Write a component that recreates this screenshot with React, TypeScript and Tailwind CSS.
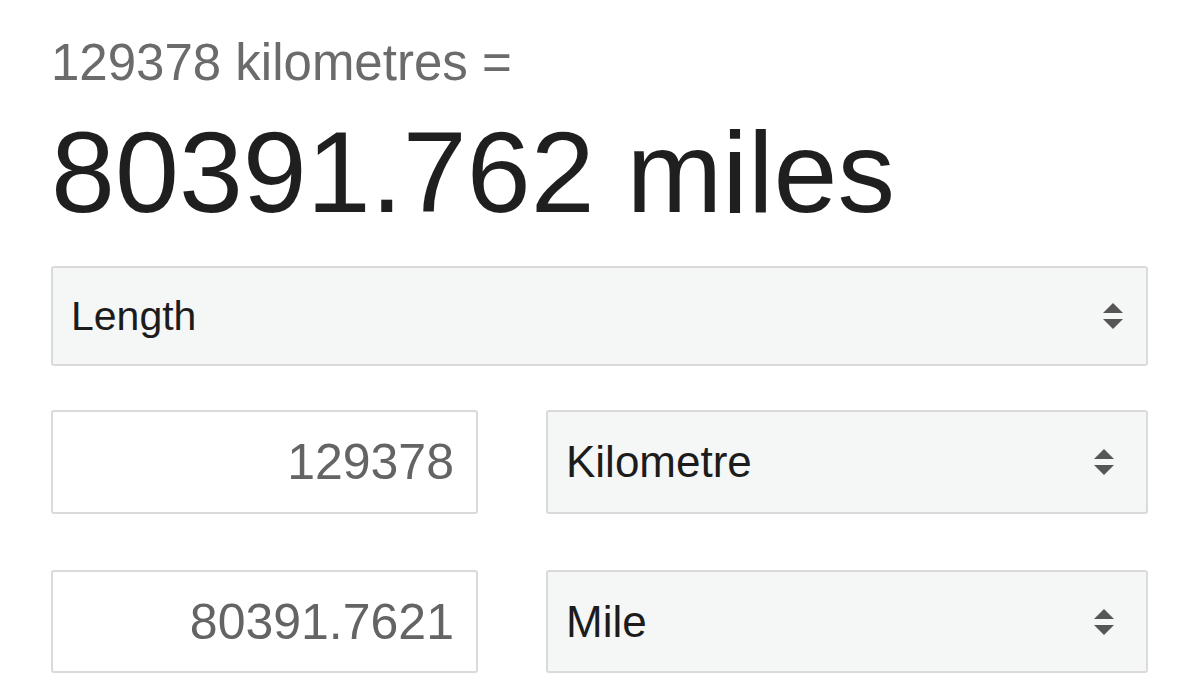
import React from "react";

function Arrows() {
  return (
    <svg width="22" height="28" viewBox="0 0 22 28" className="shrink-0">
      <polygon points="1,11 11,1 21,11" fill="#565656" />
      <polygon points="1,17 21,17 11,27" fill="#565656" />
    </svg>
  );
}

function UnitSelect({ label, size, pr }: { label: string; size: string; pr: string }) {
  return (
    <div
      className={`flex h-full flex-1 items-center justify-between rounded-[3px] border-2 border-[#dadada] bg-[#f5f6f6] pl-[18px] ${pr}`}
    >
      <span className={`${size} leading-none text-[#1c1c1c]`}>{label}</span>
      <Arrows />
    </div>
  );
}

function ValueBox({ value }: { value: string }) {
  return (
    <div className="flex h-full w-[427px] items-center justify-end rounded-[3px] border-2 border-[#dadada] bg-white pr-[22px]">
      <span className="text-[50px] leading-none text-[#646464]">{value}</span>
    </div>
  );
}

export default function App() {
  return (
    <div className="min-h-screen bg-white pl-[51px] pt-[38px] font-['Liberation_Sans',Arial,sans-serif]">
      <div className="w-[1097px]">
        <div className="text-[51px] leading-[50px] text-[#6b6b6b]">129378 kilometres =</div>
        <div className="mt-[27px] text-[115px] leading-[115px] text-[#1f1f1f]">80391.762 miles</div>

        <div className="mt-[36px] flex h-[100px]">
          <UnitSelect label="Length" size="text-[41px]" pr="pr-[22px]" />
        </div>

        <div className="mt-[44px] flex h-[104px] gap-[68px]">
          <ValueBox value="129378" />
          <UnitSelect label="Kilometre" size="text-[44px]" pr="pr-[31px]" />
        </div>

        <div className="mt-[56px] flex h-[103px] gap-[68px]">
          <ValueBox value="80391.7621" />
          <UnitSelect label="Mile" size="text-[44px]" pr="pr-[31px]" />
        </div>
      </div>
    </div>
  );
}
